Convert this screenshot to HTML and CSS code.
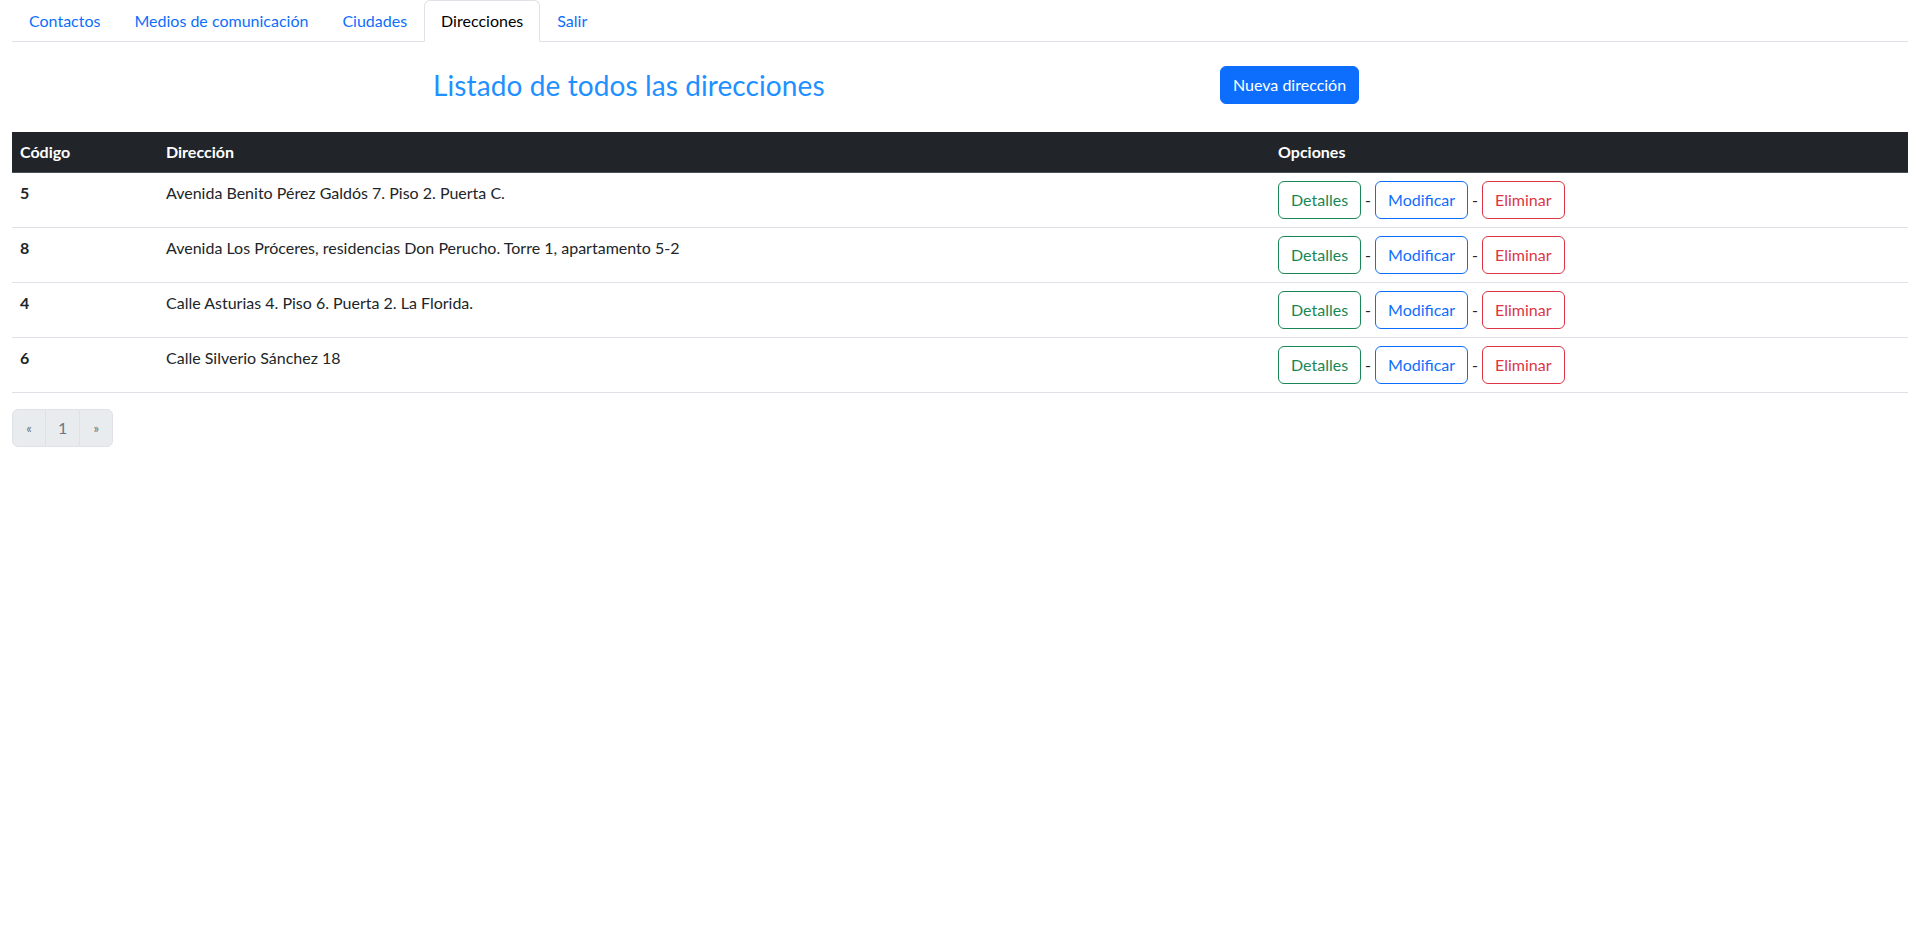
FILE: index.html
```html
<!DOCTYPE html>
<html lang="es">
<head>
<meta charset="utf-8">
<title>Direcciones</title>
<link rel="stylesheet" href="styles.css">
</head>
<body>
<div class="container">
  <ul class="nav-tabs">
    <li><a class="nav-link" href="#">Contactos</a></li>
    <li><a class="nav-link" href="#">Medios de comunicación</a></li>
    <li><a class="nav-link" href="#">Ciudades</a></li>
    <li><a class="nav-link active" href="#">Direcciones</a></li>
    <li><a class="nav-link" href="#">Salir</a></li>
  </ul>

  <div class="header">
    <h3 class="title">Listado de todos las direcciones</h3>
    <div class="header-action"><a class="btn btn-primary" href="#">Nueva dirección</a></div>
  </div>

  <table class="table">
    <colgroup>
      <col class="col-code">
      <col class="col-dir">
      <col class="col-opt">
    </colgroup>
    <thead>
      <tr><th>Código</th><th>Dirección</th><th>Opciones</th></tr>
    </thead>
    <tbody>
      <tr>
        <th>5</th>
        <td>Avenida Benito Pérez Galdós 7. Piso 2. Puerta C.</td>
        <td><a class="btn btn-outline-success" href="#">Detalles</a><span class="sep">-</span><a class="btn btn-outline-primary" href="#">Modificar</a><span class="sep">-</span><a class="btn btn-outline-danger" href="#">Eliminar</a></td>
      </tr>
      <tr>
        <th>8</th>
        <td>Avenida Los Próceres, residencias Don Perucho. Torre 1, apartamento 5-2</td>
        <td><a class="btn btn-outline-success" href="#">Detalles</a><span class="sep">-</span><a class="btn btn-outline-primary" href="#">Modificar</a><span class="sep">-</span><a class="btn btn-outline-danger" href="#">Eliminar</a></td>
      </tr>
      <tr>
        <th>4</th>
        <td>Calle Asturias 4. Piso 6. Puerta 2. La Florida.</td>
        <td><a class="btn btn-outline-success" href="#">Detalles</a><span class="sep">-</span><a class="btn btn-outline-primary" href="#">Modificar</a><span class="sep">-</span><a class="btn btn-outline-danger" href="#">Eliminar</a></td>
      </tr>
      <tr>
        <th>6</th>
        <td>Calle Silverio Sánchez 18</td>
        <td><a class="btn btn-outline-success" href="#">Detalles</a><span class="sep">-</span><a class="btn btn-outline-primary" href="#">Modificar</a><span class="sep">-</span><a class="btn btn-outline-danger" href="#">Eliminar</a></td>
      </tr>
    </tbody>
  </table>

  <ul class="pagination">
    <li class="page-item"><span class="page-link arrow">«</span></li>
    <li class="page-item"><span class="page-link">1</span></li>
    <li class="page-item"><span class="page-link arrow">»</span></li>
  </ul>
</div>
</body>
</html>
```
FILE: styles.css
```css
* { box-sizing: border-box; }
html, body {
  margin: 0;
  padding: 0;
  background: #fff;
}
body {
  font-family: Lato, "Noto Sans", sans-serif;
  font-size: 16px;
  line-height: 24px;
  color: #212529;
}
a { text-decoration: none; }

.container {
  padding: 0 12px;
}

/* tabs */
.nav-tabs {
  display: flex;
  list-style: none;
  margin: 0;
  padding: 0;
  border-bottom: 1px solid #dee2e6;
}
.nav-link {
  display: block;
  padding: 8px 16px;
  margin-bottom: -1px;
  color: #0d6efd;
  border: 1px solid transparent;
  border-radius: 6px 6px 0 0;
}
.nav-link.active {
  color: #000;
  background: #fff;
  border-color: #dee2e6 #dee2e6 #fff;
}

/* header */
.header {
  display: grid;
  grid-template-columns: 421px 787px auto;
  align-items: center;
  margin: 24px 0 28px;
  height: 38px;
}
.title {
  grid-column: 2;
  margin: 0;
  font-size: 28px;
  line-height: 34px;
  font-weight: 400;
  color: #1e90ff;
  letter-spacing: 0.1px;
}
.header-action { grid-column: 3; }

/* buttons */
.btn {
  display: inline-block;
  padding: 6px 12px;
  font-size: 16px;
  line-height: 24px;
  border: 1px solid transparent;
  border-radius: 6px;
  vertical-align: middle;
  white-space: nowrap;
}
.btn-primary {
  color: #fff;
  background: #0d6efd;
  border-color: #0d6efd;
}
.btn-outline-success { color: #198754; border-color: #198754; }
.btn-outline-primary { color: #0d6efd; border-color: #0d6efd; }
.btn-outline-danger { color: #dc3545; border-color: #dc3545; }
.sep {
  display: inline-block;
  padding: 0 4px;
  vertical-align: middle;
}

/* table */
.table {
  width: 100%;
  border-collapse: collapse;
  table-layout: fixed;
  margin-bottom: 16px;
}
.col-code { width: 146px; }
.col-dir { width: 1112px; }
.table th, .table td {
  padding: 8px;
  text-align: left;
  vertical-align: top;
  border-bottom: 1px solid #dee2e6;
}
.table thead th {
  background: #212529;
  color: #fff;
  font-weight: 700;
  border-bottom-color: #495057;
}
.table tbody th { font-weight: 700; }

/* pagination */
.pagination {
  display: flex;
  list-style: none;
  margin: 0;
  padding: 0;
}
.page-link {
  display: block;
  padding: 6px 12px;
  min-width: 34px;
  text-align: center;
  color: #6c757d;
  background: #e9ecef;
  border: 1px solid #dee2e6;
  margin-left: -1px;
}
.page-item:first-child .page-link {
  margin-left: 0;
  border-radius: 6px 0 0 6px;
}
.page-item:last-child .page-link {
  border-radius: 0 6px 6px 0;
}
.page-link.arrow { font-size: 13px; }
```
